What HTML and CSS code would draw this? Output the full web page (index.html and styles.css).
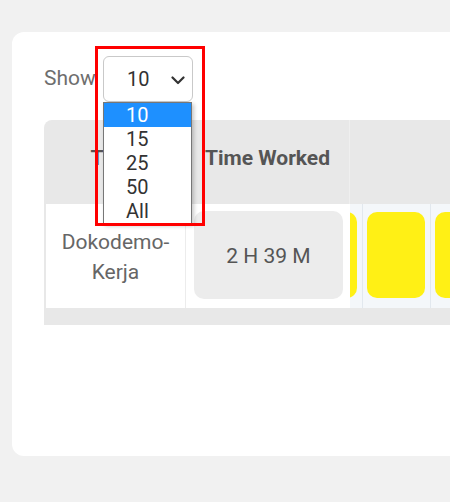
FILE: index.html
```html
<!DOCTYPE html>
<html lang="en">
<head>
<meta charset="utf-8">
<title>Time Worked</title>
<link rel="stylesheet" href="styles.css">
</head>
<body>
<div class="page">
  <div class="card">
    <div class="controls">
      <span class="show-label">Show</span>
      <div class="select">
        <span>10</span>
        <svg class="chevron" width="14" height="9" viewBox="0 0 14 9"><path d="M1.5 1.5 L7 7 L12.5 1.5" fill="none" stroke="#333" stroke-width="2.2" stroke-linecap="round" stroke-linejoin="round"/></svg>
      </div>
    </div>

    <div class="table">
      <div class="thead">
        <div class="th th-team">Team</div>
        <div class="th th-time">Time Worked</div>
        <div class="th th-rest"></div>
      </div>
      <div class="trow">
        <div class="td td-team">Dokodemo-<br>Kerja</div>
        <div class="td td-time"><div class="time-box">2 H 39 M</div></div>
        <div class="scroll">
          <div class="track">
            <div class="cell"><div class="day"></div></div>
            <div class="cell"><div class="day"></div></div>
            <div class="cell"><div class="day"></div></div>
          </div>
        </div>
      </div>
      <div class="tfoot"></div>
    </div>

    <ul class="dropdown">
      <li class="opt active">10</li>
      <li class="opt">15</li>
      <li class="opt">25</li>
      <li class="opt">50</li>
      <li class="opt">All</li>
    </ul>
    <div class="highlight"></div>
  </div>
</div>
</body>
</html>
```

FILE: styles.css
```css
* { box-sizing: border-box; }

html, body {
  margin: 0;
  height: 502px;
  overflow: hidden;
}

body {
  background: #f1f1f1;
  font-family: Roboto, "Liberation Sans", sans-serif;
}

.page {
  padding: 32px 0 0 12px;
}

.card {
  position: relative;
  width: 480px;
  height: 424px;
  background: #ffffff;
  border-radius: 12px;
  padding: 24px 0 0 32px;
}

.controls {
  display: flex;
  align-items: center;
  height: 46px;
}

.show-label {
  width: 59px;
  font-size: 21px;
  color: #6e6e6e;
  margin-bottom: 2px;
}

.select {
  width: 90px;
  height: 46px;
  border: 1px solid #c9c9c9;
  border-radius: 6px;
  display: flex;
  align-items: center;
  justify-content: space-between;
  padding: 0 7px 0 23px;
  font-size: 20px;
  color: #333;
}

.chevron { display: block; margin-top: 2px; }

.table {
  margin-top: 18px;
}

.thead {
  display: flex;
  height: 84px;
  background: #e8e8e8;
  border-top-left-radius: 8px;
}

.th {
  display: flex;
  align-items: center;
  justify-content: center;
  font-weight: 700;
  font-size: 21px;
  color: #555;
  padding-bottom: 8px;
}

.th-team { width: 142px; padding-left: 4px; }
.th-time { width: 164px; border-right: 1px solid #efefef; }
.th-rest { flex: 1; }

.trow {
  display: flex;
  height: 104px;
}

.td-team {
  width: 142px;
  background: #fff;
  border-left: 2px solid #e8e8e8;
  border-right: 1px solid #ececec;
  display: flex;
  align-items: center;
  justify-content: center;
  text-align: center;
  font-size: 21px;
  line-height: 30px;
  color: #666;
  padding-top: 2px;
}

.td-time {
  width: 164px;
  background: #fff;
  padding: 7px 7px 9px 8px;
}

.time-box {
  height: 100%;
  background: #ececec;
  border-radius: 10px;
  display: flex;
  align-items: center;
  justify-content: center;
  font-size: 21px;
  color: #555;
  padding-top: 2px;
}

.scroll {
  flex: 1;
  overflow: hidden;
  background: #f4f7fa;
}

.track {
  display: flex;
  margin-left: -55px;
  height: 100%;
}

.cell {
  flex: 0 0 68px;
  height: 100%;
  padding: 8px 0 10px 4px;
  border-right: 1px solid #e2e8ee;
}

.day {
  width: 58px;
  height: 100%;
  background: #fff015;
  border-radius: 10px;
}

.tfoot {
  height: 17px;
  background: #e8e8e8;
}

.dropdown {
  position: absolute;
  left: 91px;
  top: 70px;
  width: 89px;
  margin: 0;
  padding: 0;
  list-style: none;
  background: #fff;
  border: 1px solid #777;
  box-shadow: 2px 2px 4px rgba(0, 0, 0, 0.22);
}

.opt {
  height: 24px;
  line-height: 24px;
  padding-left: 22px;
  font-size: 20px;
  color: #333;
}

.opt.active {
  background: #1e90ff;
  color: #fff;
}

.highlight {
  position: absolute;
  left: 83px;
  top: 14px;
  width: 110px;
  height: 180px;
  border: 3px solid #ff0000;
}
```
